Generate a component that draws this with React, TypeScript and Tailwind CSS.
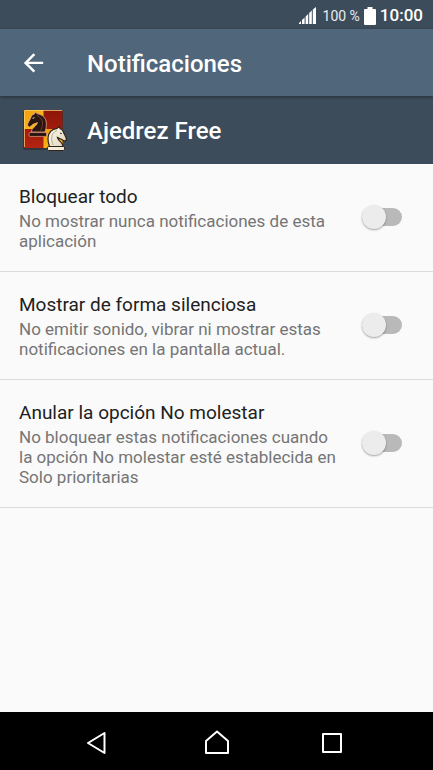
import { useState } from "react";

type Setting = { id: string; title: string; description: string };

const settings: Setting[] = [
  {
    id: "block",
    title: "Bloquear todo",
    description: "No mostrar nunca notificaciones de esta aplicación",
  },
  {
    id: "silent",
    title: "Mostrar de forma silenciosa",
    description: "No emitir sonido, vibrar ni mostrar estas notificaciones en la pantalla actual.",
  },
  {
    id: "override",
    title: "Anular la opción No molestar",
    description: "No bloquear estas notificaciones cuando la opción No molestar esté establecida en Solo prioritarias",
  },
];

function StatusBar() {
  return (
    <div className="flex h-[29px] items-center justify-end bg-[#3d4c5a] pt-[2px] pr-[10px] text-white">
      <svg width="17" height="17" viewBox="0 0 17 17" fill="#fff" aria-hidden="true">
        <path d="M0 17v-1l2-2v3zM3 17v-4l2.600-2.500V17zM6.600 17V9.500l2.600-2.500V17zM10.200 17V6l2.600-2.500V17zM13.800 17V2.600L17 0v17z" />
      </svg>
      <span className="ml-[7px] text-sm text-[#e8edf1]">100 %</span>
      <svg className="ml-[4px]" width="12" height="18" viewBox="0 0 12 18" fill="#fff" aria-hidden="true">
        <path d="M3.500 0h5v2H11q1 0 1 1v14q0 1-1 1H1q-1 0-1-1V3q0-1 1-1h2.500z" />
      </svg>
      <span className="ml-[4px] text-[17px] font-medium">10:00</span>
    </div>
  );
}

function ChessIcon() {
  return (
    <svg className="shrink-0" width="46" height="46" viewBox="0 0 46 46" aria-hidden="true">
      <defs>
        <linearGradient id="gold" x1="0" y1="0" x2="1" y2="1">
          <stop offset="0" stopColor="#ee9d09" />
          <stop offset="1" stopColor="#ffc51b" />
        </linearGradient>
        <linearGradient id="red" x1="0" y1="0" x2="0" y2="1">
          <stop offset="0" stopColor="#8d1608" />
          <stop offset="1" stopColor="#b32311" />
        </linearGradient>
        <linearGradient id="ivory" x1="0" y1="0" x2="1" y2="1">
          <stop offset="0" stopColor="#fffdf0" />
          <stop offset="1" stopColor="#ddd3b9" />
        </linearGradient>
      </defs>
      <rect x="1" y="3" width="40" height="39" rx="2" fill="#2a2b2e" opacity=".65" />
      <rect x="2" y="2" width="38.500" height="38" rx="1.500" fill="url(#red)" />
      <path d="M3 2h18.500v19H2V3q0-1 1-1z" fill="url(#gold)" />
      <path d="M21.500 21h19v18q0 1-1 1h-18z" fill="url(#gold)" />
      <path d="M2.500 39V3q0-.5.5-.5h37" fill="none" stroke="#ffd57c" strokeWidth=".9" opacity=".8" />
      <path
        d="M9.500 24c-.3-4 5-5.500 6-9.500-2.500 1.500-4.500 1-6.200 3.300L7.500 19l-2-1.500c0-3 2.500-5 3.500-8.500L10 7l2.500-1L13 4l2.500 1.800C20.500 6.500 24 10 24.300 15c.2 3.500-.3 6-1.300 9z"
        fill="#2b1511"
        stroke="#e3a68f"
        strokeWidth=".8"
      />
      <path d="M15 7.500c4 2 6 5 5.500 9-.2 2.500-1.200 4.500-2 6" fill="none" stroke="#6b4434" strokeWidth="1" />
      <path d="M10.500 10.300l2-.6" stroke="#f3d5bd" strokeWidth="1" />
      <rect x="7" y="24.600" width="17.500" height="3.800" rx="1" fill="#24120f" stroke="#dc977f" strokeWidth=".8" />
      <path
        d="M41 38.500c.3-4-4.500-5-5.500-9 2.500 1.500 4 1.200 5.500 2.800l1.500 1 2-1.500c0-3-2.200-5-3.200-8L40 21.500l-1.800-.7-.7-2.300-2.300 1.800C30 21 26.500 24.500 26 30c-.2 3.200.5 5.800 1.500 8.500z"
        fill="url(#ivory)"
        stroke="#302218"
        strokeWidth="1.200"
      />
      <path d="M35 22.500c-3.500 1.500-5.500 4-5.300 8 0 2.500.7 4.500 1.500 6.500" fill="none" stroke="#b5a98f" strokeWidth="1" />
      <path d="M38 25l1.800.8" stroke="#302218" strokeWidth="1" />
      <rect x="25.500" y="38.500" width="17" height="4" rx="1.200" fill="#f4edda" stroke="#302218" strokeWidth="1" />
    </svg>
  );
}

function SettingRow({ setting }: { setting: Setting }) {
  const [on, setOn] = useState(false);
  return (
    <li className="flex items-center justify-between gap-6 border-b border-[#dcdcdc] pt-[21px] pr-[31px] pb-5 pl-[19px]">
      <label htmlFor={setting.id} className="max-w-[320px] flex-1">
        <span className="block text-[19px] leading-6 text-[#212121]">{setting.title}</span>
        <span className="mt-[2px] block text-[17px] leading-5 text-[#757575]">{setting.description}</span>
      </label>
      <input
        id={setting.id}
        type="checkbox"
        role="switch"
        checked={on}
        onChange={() => setOn(!on)}
        className="relative h-[26px] w-10 shrink-0 appearance-none before:absolute before:inset-x-0 before:top-[3px] before:h-[18px] before:rounded-full before:bg-[#b9b9b9] after:absolute after:top-0 after:left-0 after:h-6 after:w-6 after:rounded-full after:bg-[#ececec] after:shadow-[0_1px_2px_rgba(0,0,0,0.35)] checked:before:bg-[#8fa3b5] checked:after:translate-x-4 checked:after:bg-[#50667a]"
      />
    </li>
  );
}

function NavigationBar() {
  return (
    <nav className="flex h-[58px] items-center justify-between bg-black px-[87px] pt-1">
      <button type="button" aria-label="Atrás">
        <svg width="28" height="28" viewBox="0 0 28 28" fill="none" stroke="#fff" strokeWidth="2" strokeLinejoin="round">
          <path d="M17.500 4v20L1 14z" />
        </svg>
      </button>
      <button type="button" aria-label="Inicio">
        <svg width="28" height="28" viewBox="0 0 28 28" fill="none" stroke="#fff" strokeWidth="2" strokeLinejoin="round">
          <path d="M3 24V12L14 2.500 25 12v12z" />
        </svg>
      </button>
      <button type="button" aria-label="Aplicaciones recientes">
        <svg width="28" height="28" viewBox="0 0 28 28" fill="none" stroke="#fff" strokeWidth="2" strokeLinejoin="round">
          <path d="M5 5h18v18H5z" />
        </svg>
      </button>
    </nav>
  );
}

export default function App() {
  return (
    <div className="flex min-h-screen flex-col bg-[#fafafa] font-[Roboto,sans-serif]">
      <StatusBar />
      <header className="z-10 flex h-[67px] items-center bg-[#50667a] pt-[2px] pl-[19px] text-white shadow-[0_1px_3px_rgba(0,0,0,0.4)]">
        <button type="button" aria-label="Volver">
          <svg width="29" height="29" viewBox="0 0 24 24" fill="#fff">
            <path d="M20 10.500H7.830l5.590-5.590L12 3.500l-8 8 8 8 1.410-1.410L7.830 12.500H20v-2z" />
          </svg>
        </button>
        <h1 className="ml-[39px] text-2xl font-medium">Notificaciones</h1>
      </header>
      <section className="flex h-[68px] items-center bg-[#3d4c5a] pt-[2px] pl-[22px] text-white">
        <ChessIcon />
        <h2 className="ml-[19px] text-2xl font-medium">Ajedrez Free</h2>
      </section>
      <main className="flex-1">
        <ul>
          {settings.map((setting) => (
            <SettingRow key={setting.id} setting={setting} />
          ))}
        </ul>
      </main>
      <NavigationBar />
    </div>
  );
}
